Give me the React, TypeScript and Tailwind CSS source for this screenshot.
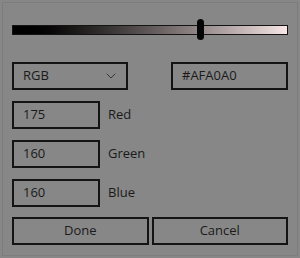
import { ChevronDown } from 'lucide-react'

const field = 'border-2 border-[#141414] h-[28px] flex items-center text-[13px] text-[#1a1a1a]'

function NumberRow({ value, label }: { value: string; label: string }) {
  return (
    <div className="flex items-center">
      <div className={`${field} w-[88px] pl-[9px]`}>{value}</div>
      <span className="ml-[8px] text-[13px] text-[#1a1a1a]">{label}</span>
    </div>
  )
}

export default function App() {
  return (
    <div
      className="w-[300px] h-[258px] bg-[#878787] p-[2px]"
      style={{ fontFamily: '"Open Sans", "Noto Sans", sans-serif' }}
    >
      <div className="h-full border border-[#7d7d7d] px-[9px] pt-[16px] flex flex-col">
        {/* hue slider */}
        <div className="relative h-[21px] flex items-center">
          <div className="w-full h-[10px] border border-[#141414] bg-gradient-to-r from-[#000000] to-[#f8e6e6]" />
          <div className="absolute left-[185px] top-0 w-[7px] h-[21px] rounded-full bg-[#050505]" />
        </div>

        <div className="mt-[22px] flex flex-col gap-[11px]">
          <div className="flex justify-between">
            <div className={`${field} w-[116px] pl-[9px] pr-[7px] justify-between`}>
              <span>RGB</span>
              <ChevronDown size={16} strokeWidth={1.1} />
            </div>
            <div className={`${field} w-[117px] pl-[9px]`}>#AFA0A0</div>
          </div>
          <NumberRow value="175" label="Red" />
          <NumberRow value="160" label="Green" />
          <NumberRow value="160" label="Blue" />
        </div>

        <div className="mt-[10px] grid grid-cols-2 gap-[3px]">
          <div className={`${field} justify-center`}>Done</div>
          <div className={`${field} justify-center`}>Cancel</div>
        </div>
      </div>
    </div>
  )
}
